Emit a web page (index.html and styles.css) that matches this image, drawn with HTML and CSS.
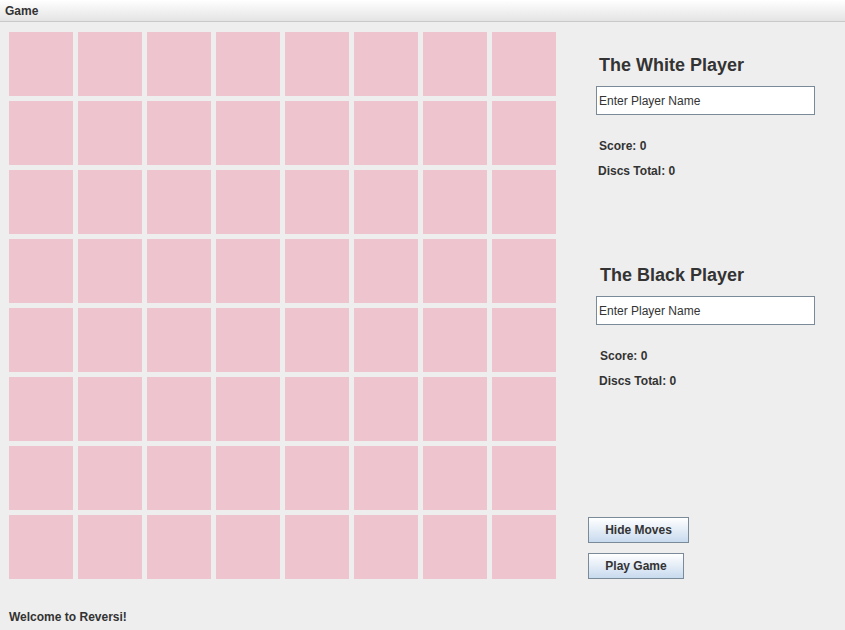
FILE: index.html
```html
<!DOCTYPE html>
<html>
<head>
<meta charset="utf-8">
<link rel="stylesheet" href="styles.css">
</head>
<body>
<div class="window">
  <div class="menubar"><span class="menu">Game</span></div>
  <div class="content">
    <div class="board">
      <div class="cell"></div><div class="cell"></div><div class="cell"></div><div class="cell"></div><div class="cell"></div><div class="cell"></div><div class="cell"></div><div class="cell"></div>
      <div class="cell"></div><div class="cell"></div><div class="cell"></div><div class="cell"></div><div class="cell"></div><div class="cell"></div><div class="cell"></div><div class="cell"></div>
      <div class="cell"></div><div class="cell"></div><div class="cell"></div><div class="cell"></div><div class="cell"></div><div class="cell"></div><div class="cell"></div><div class="cell"></div>
      <div class="cell"></div><div class="cell"></div><div class="cell"></div><div class="cell"></div><div class="cell"></div><div class="cell"></div><div class="cell"></div><div class="cell"></div>
      <div class="cell"></div><div class="cell"></div><div class="cell"></div><div class="cell"></div><div class="cell"></div><div class="cell"></div><div class="cell"></div><div class="cell"></div>
      <div class="cell"></div><div class="cell"></div><div class="cell"></div><div class="cell"></div><div class="cell"></div><div class="cell"></div><div class="cell"></div><div class="cell"></div>
      <div class="cell"></div><div class="cell"></div><div class="cell"></div><div class="cell"></div><div class="cell"></div><div class="cell"></div><div class="cell"></div><div class="cell"></div>
      <div class="cell"></div><div class="cell"></div><div class="cell"></div><div class="cell"></div><div class="cell"></div><div class="cell"></div><div class="cell"></div><div class="cell"></div>
    </div>
    <div class="side">
      <div class="player">
        <h2 class="player-title">The White Player</h2>
        <input class="name-input" type="text" value="Enter Player Name">
        <div class="stat stat-score">Score: 0</div>
        <div class="stat stat-discs">Discs Total: 0</div>
      </div>
      <div class="player player-black">
        <h2 class="player-title">The Black Player</h2>
        <input class="name-input" type="text" value="Enter Player Name">
        <div class="stat stat-score">Score: 0</div>
        <div class="stat stat-discs">Discs Total: 0</div>
      </div>
      <div class="buttons">
        <button class="btn btn-hide">Hide Moves</button>
        <button class="btn btn-play">Play Game</button>
      </div>
    </div>
  </div>
  <div class="status">Welcome to Reversi!</div>
</div>
</body>
</html>
```
FILE: styles.css
```css
* { box-sizing: border-box; }
html, body {
  margin: 0;
  padding: 0;
  background: #eeeeee;
}
body {
  font-family: "Liberation Sans", Arial, sans-serif;
  color: #333333;
}
.window {
  width: 845px;
  height: 630px;
  display: flex;
  flex-direction: column;
  overflow: hidden;
}
.menubar {
  height: 22px;
  background: linear-gradient(#ffffff, #e4e4e4);
  border-bottom: 1px solid #c9c9c9;
  display: flex;
  align-items: center;
  padding-left: 5px;
}
.menu {
  font-size: 12px;
  font-weight: bold;
  color: #333333;
}
.content {
  display: flex;
  flex: 1;
}
.board {
  margin: 10px 0 0 9px;
  display: grid;
  grid-template-columns: repeat(8, 64px);
  grid-auto-rows: 64px;
  gap: 5px;
  align-self: flex-start;
}
.cell {
  background: #eec4cf;
}
.side {
  margin-left: 32px;
  display: flex;
  flex-direction: column;
  width: 240px;
}
.player {
  display: flex;
  flex-direction: column;
  align-items: flex-start;
  padding-left: 8px;
  height: 210px;
}
.player-title {
  margin: 33px 0 0 3px;
  font-size: 18px;
  line-height: 20px;
  font-weight: bold;
  color: #333333;
}
.player-black .player-title { margin-left: 4px; }
.name-input {
  margin-top: 11px;
  width: 219px;
  height: 29px;
  border: 1px solid #7a8a99;
  background: #ffffff;
  font-family: "Liberation Sans", Arial, sans-serif;
  font-size: 12px;
  color: #333333;
  padding: 0 2px;
  outline: none;
}
.stat {
  font-size: 12px;
  font-weight: bold;
  line-height: 14px;
  color: #333333;
}
.stat-score { margin: 24px 0 0 3px; }
.stat-discs { margin: 11px 0 0 2px; }
.player-black .stat-score { margin-left: 4px; }
.player-black .stat-discs { margin-left: 3px; }
.buttons {
  margin-top: 75px;
  display: flex;
  flex-direction: column;
  align-items: flex-start;
  gap: 10px;
}
.btn {
  height: 26px;
  border: 1px solid #7a8a99;
  background: linear-gradient(#ffffff, #c8daee);
  font-family: "Liberation Sans", Arial, sans-serif;
  font-size: 12px;
  font-weight: bold;
  color: #333333;
  padding: 0;
}
.btn-hide { width: 101px; }
.btn-play { width: 96px; }
.status {
  height: 24px;
  padding: 4px 0 0 9px;
  font-size: 12px;
  font-weight: bold;
  color: #333333;
  line-height: 14px;
}
```
